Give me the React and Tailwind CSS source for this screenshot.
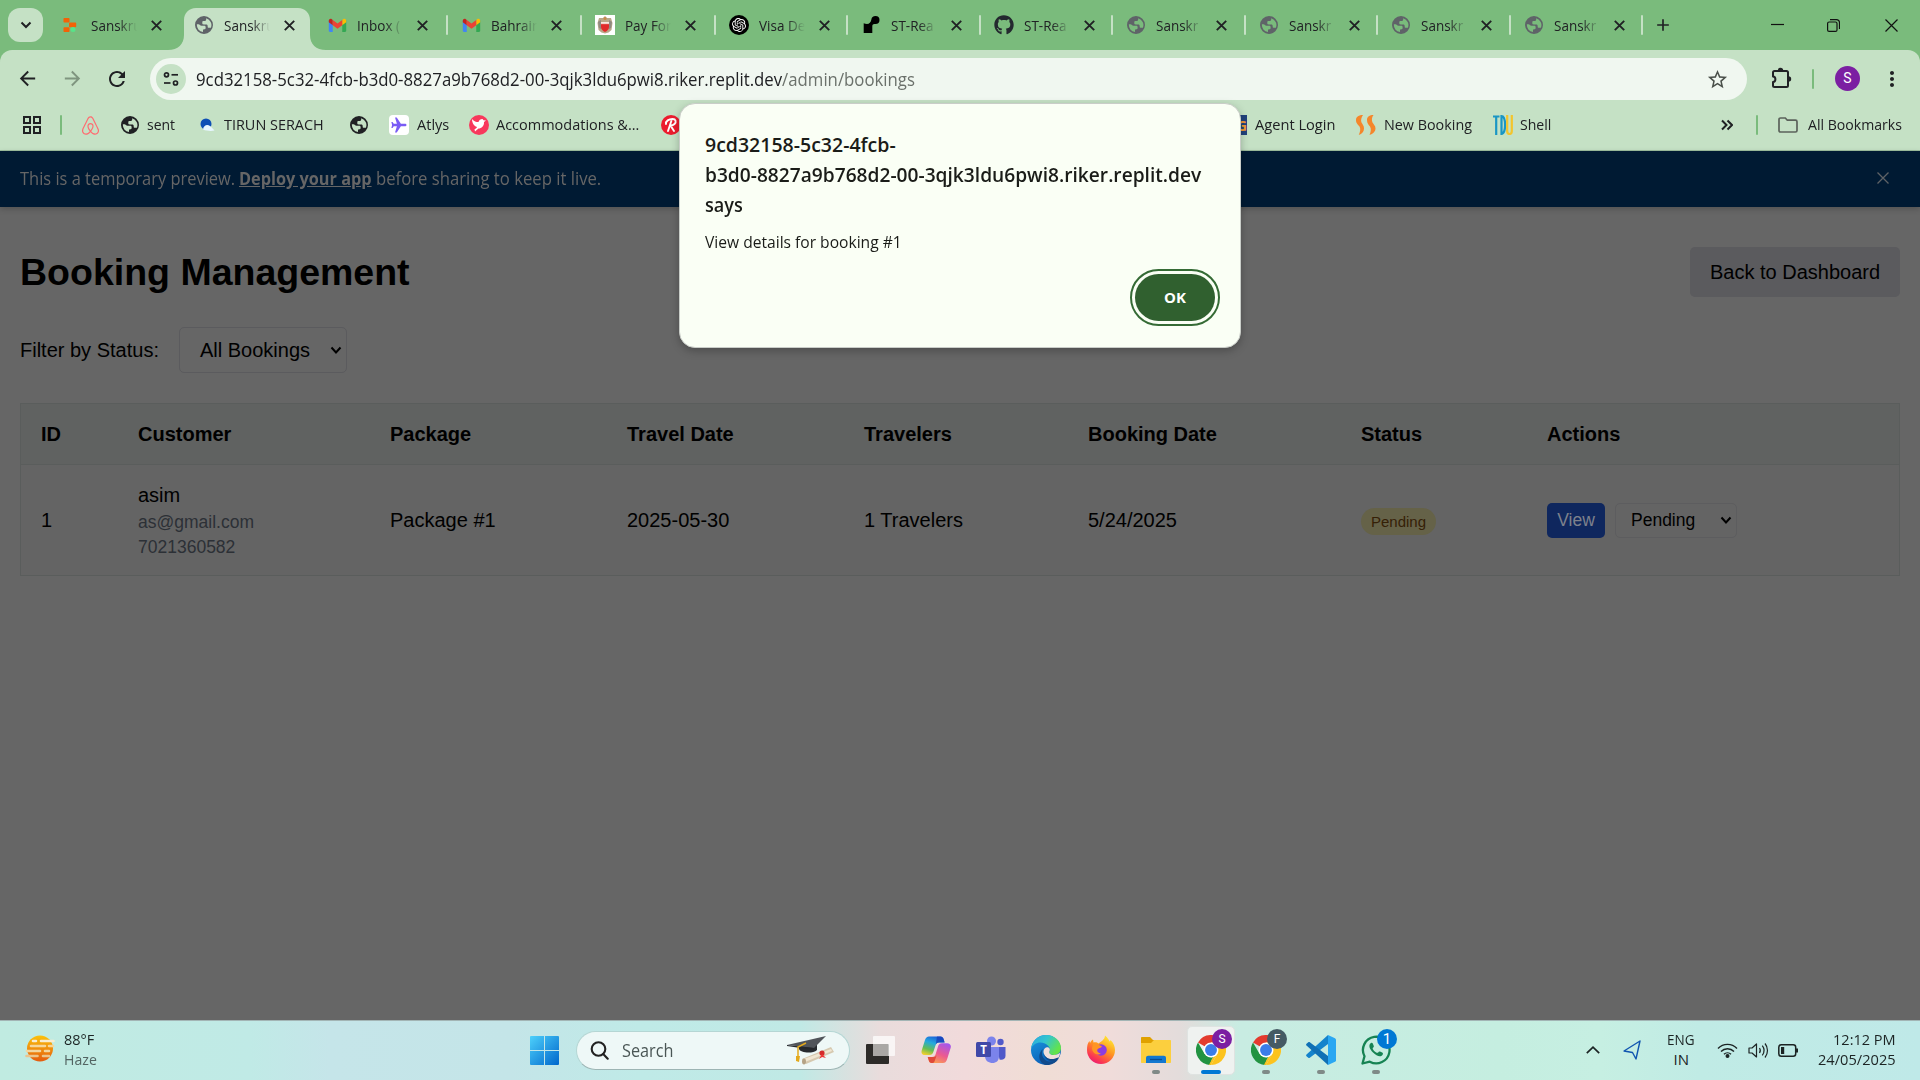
import React, { useLayoutEffect, useRef, useState } from "react";
import { MdRefresh, MdArrowBack, MdArrowForward, MdStarBorder, MdAdd, MdMoreVert } from "react-icons/md";
import { FaGithub, FaAirbnb } from "react-icons/fa";
import { SiOpenai } from "react-icons/si";

/* Single line of text condensed or widened to fill the width of its box. */
function Fit({ className = "", children }) {
  const box = useRef(null);
  const text = useRef(null);
  const [scale, setScale] = useState(1);
  useLayoutEffect(() => {
    setScale(box.current.clientWidth / text.current.offsetWidth);
  }, []);
  return (
    <span ref={box} className={`block shrink-0 whitespace-nowrap ${className}`}>
      <span ref={text} className="inline-block origin-left" style={{ transform: `scaleX(${scale})` }}>
        {children}
      </span>
    </span>
  );
}

/* ---------- favicons ---------- */
const Globe = ({ className }) => (
  <svg className={`size-[18px] shrink-0 ${className}`} viewBox="0 0 18 18">
    <path
      fillRule="evenodd"
      fill="currentColor"
      d="M9 0a9 9 0 1 0 0 18A9 9 0 0 0 9 0zM11.200 2.200v1.300c0 .9-.7 1.500-1.600 1.500H8.200c-.5 0-.9.4-.9.900v1.300c0 .8.5 1.200 1.300 1.200h2.600c1 0 1.500.7 1.500 1.500v.9c0 .6.4 1 1 1h2.200A7.200 7.200 0 0 0 11.200 2.200zM1.900 8.200A7.200 7.200 0 0 0 8 16.100v-1.500c0-.9.500-1.300 1.300-1.300.9 0 1.300-.6 1.300-1.400v-.8c0-.9-.6-1.400-1.400-1.400H6.500c-.7 0-1.200-.3-1.600-.8-.4-.5-.8-.7-1.400-.7z"
    />
  </svg>
);
const GreyGlobe = () => <Globe className="text-[#5f6368]" />;
const DarkGlobe = () => <Globe className="mx-px text-[#202124]" />;

const Replit = () => (
  <svg className="size-5" viewBox="0 0 20 20">
    <rect x="2.500" y="3" width="6" height="4.600" rx=".8" fill="#f26207" />
    <rect x="8" y="7.600" width="7.200" height="4.600" rx=".8" fill="#f26207" />
    <rect x="2.500" y="12.200" width="6" height="4.800" rx=".8" fill="#f26207" />
    <circle cx="12" cy="14.500" r="2.500" fill="#57e389" />
  </svg>
);

const Gmail = () => (
  <svg className="size-[19px]" viewBox="0 0 24 24">
    <path d="M1 5.500v13.200c0 .8.700 1.500 1.500 1.500H6V10.500z" fill="#4285f4" />
    <path d="M18 10.500v9.700h3.500c.8 0 1.500-.7 1.500-1.500V5.500z" fill="#34a853" />
    <path d="M18 5v6.600l5-3.800V5.900c0-2-2.200-3.100-3.800-1.900z" fill="#fbbc04" />
    <path d="M6 5v6.600L1 7.800V5.900C1 3.900 3.200 2.800 4.800 4z" fill="#c5221f" />
    <path d="M6 11.600V4.900l6 4.500 6-4.500v6.700l-6 4.500z" fill="#ea4335" />
  </svg>
);

const Crest = () => (
  <svg className="size-5" viewBox="0 0 20 20">
    <rect width="20" height="20" fill="#fff" />
    <path d="M4 3h4l2-2 2 2h4l1.500 5-1 7-3 2.500-3.500 1-3.500-1-3-2.500-1-7z" fill="#b9a888" />
    <path d="M3 7l3-2v9l-2-1zM17 7l-3-2v9l2-1z" fill="#8f8a80" />
    <circle cx="10" cy="3.500" r="1.500" fill="#c98a4a" />
    <path d="M6 7h8v5c0 2.600-2 4-4 5-2-1-4-2.400-4-5z" fill="#e02b2b" />
    <path d="M6 7h8v2.500l-1-1-1 1-1-1-1 1-1-1-1 1-1-1-1 1z" fill="#f5e9e0" />
  </svg>
);

const OpenAI = () => (
  <span className="flex size-5 items-center justify-center rounded-full bg-black">
    <SiOpenai className="size-[14px] text-white" />
  </span>
);

const Render = () => (
  <svg className="size-5" viewBox="0 0 20 20">
    <path d="M14.500 1a4.300 4.300 0 0 0-4.200 3.700C9.900 7.300 8.300 9 6 9c-1.200 0-2.300-.3-3.300-.8V18h8.600v-7c0-1.300.9-2 2-2h1.200a4 4 0 0 0 0-8z" fill="#000" />
  </svg>
);

const tabs = [
  { title: "Sanskru", icon: <Replit />, width: "w-[133px]" },
  { title: "Sanskru", icon: <GreyGlobe />, width: "w-[133px]", active: true },
  { title: "Inbox (", icon: <Gmail />, width: "w-[134px]", sep: true },
  { title: "Bahrain", icon: <Gmail />, width: "w-[134px]", sep: true },
  { title: "Pay For", icon: <Crest />, width: "w-[134px]", sep: true },
  { title: "Visa De", icon: <OpenAI />, width: "w-[132px]", sep: true },
  { title: "ST-Rea", icon: <Render />, width: "w-[133px]", sep: true },
  { title: "ST-Rea", icon: <FaGithub className="size-5 text-[#24292f]" />, width: "w-[132px]", sep: true },
  { title: "Sanskr", icon: <GreyGlobe />, width: "w-[133px]", sep: true },
  { title: "Sanskr", icon: <GreyGlobe />, width: "w-[132px]", sep: true },
  { title: "Sanskr", icon: <GreyGlobe />, width: "w-[133px]", sep: true },
  { title: "Sanskr", icon: <GreyGlobe />, width: "w-[132px]", sep: true },
];

function Tab({ title, icon, width, active, sep }) {
  return (
    <div className={`relative flex h-[50px] shrink-0 items-center pl-[14px] ${width}`}>
      {active && (
        <svg className="absolute top-2 left-[-12px] h-[42px] w-[158px]" viewBox="0 0 158 42">
          <path d="M0 42C10 42 16 36 16 27V12C16 5 21 0 28 0H130C137 0 142 5 142 12V27C142 36 148 42 158 42Z" fill="#c5e1c5" />
        </svg>
      )}
      <span className="relative flex h-5 w-5 shrink-0 items-center justify-center">{icon}</span>
      <span className="relative ml-[10px] w-[46px] shrink-0 text-[15px] leading-6 whitespace-nowrap text-[#202124] [mask-image:linear-gradient(to_right,black_60%,transparent)]">
        <span className="inline-block origin-left scale-x-[0.9]">{title}</span>
      </span>
      <svg className="relative ml-[14px] size-[11px] shrink-0" viewBox="0 0 11 11" stroke="#202124" strokeWidth="1.900"><path d="M.8.8l9.400 9.400M10.200.8.8 10.200" /></svg>
      {sep && <span className="absolute right-[-1px] h-5 w-[2px] rounded-full bg-[#c5e1c5]" />}
    </div>
  );
}

function TabStrip() {
  return (
    <div className="flex h-[50px] items-center bg-[#7abb7c]">
      <span className="ml-2 flex h-[34px] w-[35px] shrink-0 items-center justify-center rounded-[12px] bg-[#c5e1c5]">
        <svg className="h-3 w-3" viewBox="0 0 12 12" fill="none" stroke="#202124" strokeWidth="2"><path d="M1.500 3.500 6 8l4.500-4.500" /></svg>
      </span>
      <div className="ml-1 flex">{tabs.map((t, i) => <Tab key={i} {...t} />)}</div>
      <MdAdd className="ml-[11px] size-5 text-[#202124]" />
      <div className="ml-auto flex items-center text-[#111]">
        <svg className="mr-[43px] size-[13px]" viewBox="0 0 13 13"><path d="M0 5.500h13" stroke="currentColor" strokeWidth="1.200" /></svg>
        <svg className="mr-[45px] size-[13px]" viewBox="0 0 13 13" fill="none" stroke="currentColor" strokeWidth="1.200">
          <rect x=".6" y="3" width="9.400" height="9.400" rx="1.500" />
          <path d="M3 .6h6.500a3 3 0 0 1 3 3V10" />
        </svg>
        <svg className="mr-[22px] size-[13px]" viewBox="0 0 13 13"><path d="M.5.5l12 12M12.500.5l-12 12" stroke="currentColor" strokeWidth="1.200" /></svg>
      </div>
    </div>
  );
}

function Toolbar() {
  return (
    <div className="flex h-[58px] items-center rounded-t-[12px] bg-[#c5e1c5] text-[#202124]">
      <MdArrowBack className="-mt-px ml-[16px] size-[23px]" />
      <MdArrowForward className="-mt-px ml-[22px] size-[23px] text-[#7f957f]" />
      <MdRefresh className="-mt-px ml-[21px] size-[24px]" />
      <div className="ml-[21px] flex h-[42px] w-[1597px] items-center rounded-full bg-[#f0f7f0]">
        <span className="ml-[6px] flex size-[30px] items-center justify-center rounded-full bg-[#c5e1c5]">
          <svg className="size-4" viewBox="0 0 16 16" fill="none" stroke="#202124" strokeWidth="1.700">
            <circle cx="3.500" cy="3.800" r="2" /><path d="M8.500 3.800H15" />
            <circle cx="12.500" cy="12" r="2" /><path d="M1 12h6.500" />
          </svg>
        </span>
        <Fit className="ml-[10px] w-[719px] text-[17.5px] leading-6">
          9cd32158-5c32-4fcb-b3d0-8827a9b768d2-00-3qjk3ldu6pwi8.riker.replit.dev<span className="text-[#6b716b]">/admin/bookings</span>
        </Fit>
        <MdStarBorder className="mr-[18px] ml-auto size-[23px] text-[#4a504a]" />
      </div>
      <svg className="-mt-[2px] ml-[24px] size-[22px]" viewBox="0 0 22 22">
        <path d="M3.500 4h12c.9 0 1.500.6 1.500 1.500v13c0 .9-.6 1.500-1.500 1.500h-12c-.9 0-1.500-.6-1.500-1.500v-3.600c3.200-.2 3.200-5.200 0-5.400v-4C2 4.600 2.600 4 3.500 4z" fill="none" stroke="#202124" strokeWidth="2" strokeLinejoin="round" />
        <path d="M6.800 3.500a2.700 2.700 0 0 1 5.400 0zM17.500 9.200a2.700 2.700 0 0 1 0 5.400z" fill="#202124" />
      </svg>
      <span className="ml-[19px] h-5 w-[2px] rounded-full bg-[#7abb7c]" />
      <span className="-mt-px ml-[21px] flex size-[25px] items-center justify-center rounded-full bg-[#7b1fa2] font-[Roboto] text-[14px] text-white">S</span>
      <MdMoreVert className="-mt-px ml-[20px] size-6" />
    </div>
  );
}

function Bookmarks() {
  return (
    <div className="flex h-[43px] items-center border-b border-[#9fbf9f] bg-[#c5e1c5] pb-[8px] text-[15px] leading-5 text-[#202124]">
      <svg className="ml-[22px] size-5 shrink-0" viewBox="0 0 20 20" fill="none" stroke="#202124" strokeWidth="2">
        <rect x="2" y="2" width="6" height="6" /><rect x="12" y="2" width="6" height="6" />
        <rect x="2" y="12" width="6" height="6" /><rect x="12" y="12" width="6" height="6" />
      </svg>
      <span className="ml-[18px] h-5 w-[2px] shrink-0 rounded-full bg-[#7abb7c]" />
      <FaAirbnb className="ml-[18px] size-[21px] shrink-0 text-[#ff6b70]" />
      <span className="ml-[19px] flex"><DarkGlobe /></span>
      <Fit className="mb-[2px] ml-[7px] w-[28px]">sent</Fit>
      <svg className="ml-[22px] size-5 shrink-0" viewBox="0 0 20 20">
        <circle cx="9" cy="9" r="5.500" fill="#0d4fb5" />
        <path d="M6 14.500c.5-4 4-5.500 7-3.500 1.500 1 2.500 2.500 4.500 4.500-3 .8-8 .5-11.500-1z" fill="#e7f6ff" />
      </svg>
      <Fit className="mb-[2px] ml-[7px] w-[100px]">TIRUN SERACH</Fit>
      <span className="ml-[25px] flex"><DarkGlobe /></span>
      <span className="ml-[20px] flex size-5 shrink-0 items-center justify-center rounded-[4px] bg-white">
        <svg className="size-[18px]" viewBox="0 0 24 24"><path d="M22 12c0-1-1-1.700-2.200-1.700h-5.300L9 2H6.700l2.500 8.300H5L3.400 8H1.800l1 4-1 4h1.600L5 13.700h4.200L6.700 22H9l5.500-8.300h5.300C21 13.700 22 13 22 12z" fill="#7a5cf5" /></svg>
      </span>
      <Fit className="mb-[2px] ml-[8px] w-[32px]">Atlys</Fit>
      <span className="ml-[20px] flex size-5 shrink-0 items-center justify-center rounded-full bg-[#f8385c]">
        <svg className="size-4" viewBox="0 0 16 16"><path d="M1 2c2 2.500 4 3 6.500 3C8 3 9.500 2 11.500 2l1 1.200 2.500.3-2 1.500c.3 4-2.500 6.500-5.500 6.500L4 14.500l-.5-2.300C5 11.500 5.500 11 6 10 3 9 1 6 1 2z" fill="#fff" /></svg>
      </span>
      <Fit className="mb-[2px] ml-[7px] w-[143px]">Accommodations &amp;...</Fit>
      <span className="ml-[22px] flex size-5 shrink-0 items-center justify-center rounded-full bg-[#ec1c2e]">
        <svg className="size-4" viewBox="0 0 16 16" fill="none" stroke="#fff" strokeWidth="1.900" strokeLinecap="round" strokeLinejoin="round"><path d="M3 7C2.500 4 6 2 9.500 2 13 2 13.500 5 11.500 7 10.500 8 9 8.500 7.500 8.500L11 14M8.500 3.500 5 14" /></svg>
      </span>
      <span className="ml-[546px] flex size-5 shrink-0 items-center justify-end overflow-hidden bg-[#21427c] text-[15px] font-bold text-[#f09a35]">G</span>
      <Fit className="mb-[2px] ml-[8px] w-[80px]">Agent Login</Fit>
      <svg className="ml-[21px] size-5 shrink-0" viewBox="0 0 20 20" fill="#f5862b">
        <path d="M7 0C3 0 0 1.500 0 5s2 4.500 3.500 6.500C5 14 4 17 2.800 20 6 19 8 16.500 8 13.500S6.500 9.500 5.500 7.500 5.500 2 7 0zM17.500 0c-4 0-6.500 1.500-6.500 5s1.500 4.500 3 6.500c1.500 2.500.8 5.500-.5 8.500 3.500-1 6-3.500 6-6.500s-2-4-3-6S15.700 2 17.500 0z" />
      </svg>
      <Fit className="mb-[2px] ml-[8px] w-[88px]">New Booking</Fit>
      <svg className="ml-[21px] size-5 shrink-0" viewBox="0 0 20 20" fill="none" strokeWidth="2.200">
        <path d="M0 1.500h6.500M3.200 1v19" stroke="#1a96c4" />
        <path d="M8.500 1.200v17.600c5 0 4.500-17.600 0-17.600z" stroke="#1a96c4" />
        <path d="M14.200 0v16c0 4 4.600 4 4.600 0V0" stroke="#f3c52c" />
      </svg>
      <Fit className="mb-[2px] ml-[7px] w-[31px]">Shell</Fit>
      <svg className="ml-[170px] h-[12px] w-[12px] shrink-0" viewBox="0 0 12 12" fill="none" stroke="#202124" strokeWidth="2"><path d="M1 1.500 5.500 6 1 10.500M6.500 1.500 11 6l-4.500 4.500" /></svg>
      <span className="ml-[23px] h-5 w-[2px] shrink-0 rounded-full bg-[#7abb7c]" />
      <svg className="ml-[20px] h-[16px] w-5 shrink-0" viewBox="0 0 20 16" fill="none" stroke="#5b625b" strokeWidth="1.700"><path d="M1 13.500v-11C1 1.600 1.600 1 2.500 1h4.800l2 2.200h8.200c.9 0 1.500.6 1.500 1.500v8.800c0 .9-.6 1.500-1.500 1.500h-15C1.600 15 1 14.400 1 13.500z" /></svg>
      <Fit className="mb-[2px] ml-[10px] w-[94px]">All Bookmarks</Fit>
    </div>
  );
}

/* ---------- page ---------- */
const Chevron = ({ className = "" }) => (
  <svg className={`h-[9px] w-3 ${className}`} viewBox="0 0 12 9" fill="none" stroke="#000" strokeWidth="2"><path d="M1.500 1.500 6 6.500l4.500-5" /></svg>
);

const headers = ["ID", "Customer", "Package", "Travel Date", "Travelers", "Booking Date", "Status", "Actions"];
const columns = "grid grid-cols-[97px_252px_237px_237px_224px_273px_186px_1fr] items-center";

function Page() {
  return (
    <main className="flex h-[869px] flex-col bg-[#666] font-['Liberation_Sans',Arial,sans-serif] text-xl text-black">
      <div className="flex h-14 shrink-0 items-center bg-[#001a33] px-5 pb-[2px] font-['Open_Sans','Segoe_UI',sans-serif] text-[17.5px] leading-6 text-[#666] shadow-[0_2px_6px_rgba(0,0,0,0.2)]">
        <Fit className="w-[219px]">This is a temporary preview.&nbsp;</Fit>
        <Fit className="w-[133px] font-bold"><span className="underline">Deploy your app</span></Fit>
        <Fit className="ml-[4px] w-[225px]">before sharing to keep it live.</Fit>
        <svg className="mr-[11px] ml-auto size-3" viewBox="0 0 12 12"><path d="M.5.5l11 11M11.500.5l-11 11" stroke="#5e6266" strokeWidth="1.300" /></svg>
      </div>

      <div className="flex flex-col px-5 pt-10">
        <div className="flex h-[50px] items-center justify-between">
          <h1 className="text-[37.5px] leading-[50px] font-bold">Booking Management</h1>
          <button className="h-[50px] w-[210px] rounded-[5px] bg-[#5b5b5e] whitespace-nowrap">Back to Dashboard</button>
        </div>

        <div className="mt-[30px] flex h-[46px] items-center">
          <span className="w-[159px]">Filter by Status:</span>
          <div className="flex h-[46px] w-[168px] items-center justify-between rounded-[5px] border border-[#5b5b5e] pr-[4px] pl-5">
            All Bookings
            <Chevron className="mt-px" />
          </div>
        </div>

        <div className="mt-[30px] border border-[#5a5d5c]">
          <div className={`${columns} h-[61px] border-b border-[#5a5d5c] bg-[#606261] font-bold`}>
            {headers.map((h) => <span key={h} className="pl-5">{h}</span>)}
          </div>
          <div className={`${columns} h-[110px] bg-[#646464]`}>
            <span className="pl-5">1</span>
            <div className="flex flex-col pl-5">
              <span className="leading-[30px]">asim</span>
              <span className="text-[17.5px] leading-[25px] text-[#2c3036]">as@gmail.com</span>
              <span className="text-[17.5px] leading-[25px] text-[#2c3036]">7021360582</span>
            </div>
            <span className="pl-5">Package #1</span>
            <span className="pl-5">2025-05-30</span>
            <span className="pl-5">1 Travelers</span>
            <span className="pl-5">5/24/2025</span>
            <div className="mt-[3px] pl-5">
              <span className="flex h-[27px] w-[75px] items-center justify-center rounded-full bg-[#656248] text-[15px] text-[#352006]">Pending</span>
            </div>
            <div className="flex gap-[10px] pl-5 text-[17.5px]">
              <button className="h-[35px] w-[58px] rounded-[5px] bg-[#0f275e] text-[#7d818c]">View</button>
              <div className="flex h-[35px] w-[122px] items-center justify-between rounded-[5px] border border-[#5d5d5f] pr-[4px] pl-[15px]">
                Pending
                <Chevron />
              </div>
            </div>
          </div>
        </div>
      </div>
    </main>
  );
}

function Dialog() {
  return (
    <div className="absolute top-[103px] left-[679px] flex h-[245px] w-[562px] flex-col rounded-[16px] border border-[#c9cdc8] bg-[#fafff5] px-[25px] pt-[26px] text-[#1a1c18] shadow-[0_3px_8px_rgba(0,0,0,0.25)]">
      <div className="text-[19.5px] leading-[30px] font-semibold">
        <Fit className="w-[191px]">9cd32158-5c32-4fcb-</Fit>
        <Fit className="w-[496px]">b3d0-8827a9b768d2-00-3qjk3ldu6pwi8.riker.replit.dev</Fit>
        <Fit className="w-[38px]">says</Fit>
      </div>
      <Fit className="mt-[10px] w-[197px] text-[16px] leading-[24px]">View details for booking #1</Fit>
      <button className="mt-[15px] mr-[-5px] flex h-[57px] w-[90px] items-center justify-center self-end rounded-full border-2 border-[#356b35]">
        <span className="flex h-[47px] w-[80px] items-center justify-center rounded-full bg-[#30602f] text-[15px] font-bold text-white">
          <Fit className="w-[22px]">OK</Fit>
        </span>
      </button>
    </div>
  );
}

/* ---------- taskbar ---------- */
const ChromeLogo = () => (
  <svg className="size-[30px]" viewBox="0 0 48 48">
    <path d="M24 24 3.200 12A24 24 0 0 1 44.800 12H24z" fill="#e33b2e" />
    <path d="M24 12h20.800A24 24 0 0 1 24 48l10.400-18z" fill="#fcc31e" />
    <path d="M3.200 12 13.600 30 24 36l.4 0L24 48A24 24 0 0 1 3.200 12z" fill="#229342" />
    <path d="M34.400 30 24 48l-3.500-.5L28 34z" fill="#fcc31e" />
    <path d="M20.500 47.500 28 34l-4 2-10.400-6z" fill="#229342" />
    <circle cx="24" cy="24" r="12" fill="#fff" />
    <circle cx="24" cy="24" r="9.500" fill="#3b7de9" />
  </svg>
);

const Badge = ({ className, children }) => (
  <span className={`absolute -top-[6px] -right-[6px] flex size-5 items-center justify-center rounded-full font-[Roboto] leading-none text-white ${className}`}>{children}</span>
);

const Dot = () => <span className="absolute -bottom-[9px] left-[11px] h-1 w-2 rounded-full bg-[#7f8a87]" />;

function Taskbar() {
  return (
    <footer className="flex h-[60px] items-center border-t border-[#a3b5b5] bg-[linear-gradient(90deg,#c0ebe1_0px,#c0eae6_250px,#c5e5e9_330px,#c4e5e8_510px,#bfeae7_640px,#c0e9e5_800px,#e9dcdc_880px,#f1dadb_965px,#f0ddd5_1040px,#f0dcda_1110px,#e3dcdb_1180px,#c8ece2_1240px,#c5eee0_1500px,#c6efe2_1600px,#c0ebe5_1700px,#bfe9e8_1920px)] pb-px text-[15px] leading-5 text-[#1c2424]">
      <svg className="ml-[25px] size-[30px] shrink-0" viewBox="0 0 30 30">
        <defs>
          <linearGradient id="sun" x1="0" y1="0" x2="0" y2="1"><stop offset="0" stopColor="#fbc20a" /><stop offset="1" stopColor="#e45c10" /></linearGradient>
        </defs>
        <circle cx="15" cy="13.500" r="13" fill="url(#sun)" />
        <g strokeWidth="2.600" strokeLinecap="round" fill="none">
          <path d="M8 6h3M16 6h12.500" stroke="#f9ecd0" />
          <path d="M6 11h14M24 11h4" stroke="#f5d69a" />
          <path d="M2 16h13M20 16h4" stroke="#f2d6a0" />
          <path d="M1.500 21h11M18 21h6" stroke="#ecc48c" />
        </g>
      </svg>
      <div className="mb-[3px] ml-[9px] w-[466px]">
        <Fit className="w-[30px]">88°F</Fit>
        <Fit className="w-[33px] text-[#536462]">Haze</Fit>
      </div>
      <svg className="size-[29px] shrink-0" viewBox="0 0 29 29">
        <defs>
          <linearGradient id="win" x1="0" y1="0" x2="1" y2="1"><stop offset="0" stopColor="#4dd0fb" /><stop offset="1" stopColor="#0067cc" /></linearGradient>
        </defs>
        <path d="M1 0h13v14H0V1a1 1 0 0 1 1-1zM15 0h13a1 1 0 0 1 1 1v13H15zM0 15h14v14H1a1 1 0 0 1-1-1zM15 15h14v13a1 1 0 0 1-1 1H15z" fill="url(#win)" />
      </svg>
      <div className="ml-[17px] flex h-[39px] w-[274px] shrink-0 items-center rounded-full border border-b-[#9db5b4] border-[#b5d6d4] bg-[#eef8f7] pr-[14px] pl-[13px]">
        <svg className="size-[19px]" viewBox="0 0 19 19" fill="none" stroke="#222" strokeWidth="2.100" strokeLinecap="round"><circle cx="8.500" cy="8" r="6.800" /><path d="m13.200 13 4.500 4.700" /></svg>
        <Fit className="ml-[13px] w-[51px] text-[17.5px] leading-6 text-[#4a5655]">Search</Fit>
        <svg className="ml-auto h-[30px] w-[48px]" viewBox="0 0 48 30">
          <path d="M12 8v6c1 4 14 5 18 1V7z" fill="#262a2f" />
          <path d="M0 10 39 1 27 13z" fill="#50545a" />
          <path d="m0 10 27 3v2L0 11z" fill="#24272b" />
          <path d="M19 8 11 12v12" stroke="#e3a91d" strokeWidth="1.500" fill="none" />
          <path d="M9 21h4l-1 6-3-1z" fill="#e3a91d" />
          <path d="m15 24 29-12 3 5-28 12z" fill="#d6c9b0" />
          <path d="m17 24 27-10 1 2-27 11z" fill="#f0e6d2" />
          <ellipse cx="17" cy="26.500" rx="2" ry="3" fill="#b5a386" />
          <circle cx="35" cy="18" r="2.600" fill="#d42a2a" /><path d="m35 19 4 4-4-1-3 2z" fill="#ef3434" />
        </svg>
      </div>
      <svg className="ml-[15px] size-[30px] shrink-0" viewBox="0 0 30 30">
        <rect x="1" y="9" width="23" height="20" rx="1" fill="#2d2b29" />
        <rect x="8" y="1" width="22" height="20" rx="1" fill="#fff" fillOpacity=".72" />
        <rect x="8" y="9" width="15" height="12" fill="#aaa7a5" />
      </svg>
      <svg className="ml-[26px] size-[30px] shrink-0" viewBox="0 0 30 30">
        <defs>
          <linearGradient id="cpA" x1=".6" y1="0" x2=".2" y2="1"><stop offset="0" stopColor="#1b62d9" /><stop offset=".35" stopColor="#23a9dd" /><stop offset=".7" stopColor="#65bd53" /><stop offset="1" stopColor="#f2d02e" /></linearGradient>
          <linearGradient id="cpB" x1=".8" y1="0" x2=".3" y2="1"><stop offset="0" stopColor="#a355ee" /><stop offset=".55" stopColor="#ec5a90" /><stop offset="1" stopColor="#fba052" /></linearGradient>
        </defs>
        <path d="M8 1.500h11.500c1.600 0 2.600 1 3.100 2.500l1 3.500H18c-2 0-3 1-3.500 3L12.300 17c-.6 2-1.800 3-3.600 3H4C1 20 0 18 .7 15.500L4 5C4.800 2.700 6 1.500 8 1.500z" fill="url(#cpA)" />
        <path d="M16 1.500h3.500c1.600 0 2.600 1 3.100 2.500l1 3.500H18c-1.500 0-2.500.7-3.200 2z" fill="#1740b8" fillOpacity=".8" />
        <path d="M22 28H10.500c-1.600 0-2.300-1-2.700-2.500L6.700 22H11c2 0 3-1 3.700-3L17 11.500c.7-2 1.800-3.200 3.800-3.200H26c3 0 4.400 2 3.700 4.500L26 24.500C25.200 27 24 28 22 28z" fill="url(#cpB)" />
        <path d="M6.700 22h6c1.400 0 2.200-.5 3-2l-2 6c-.6 1.600-1.200 2-2.200 2h-1c-1.600 0-2.300-1-2.700-2.500z" fill="#e04a3a" />
      </svg>
      <svg className="ml-[25px] size-[30px] shrink-0" viewBox="0 0 30 30">
        <circle cx="24.500" cy="7" r="3.200" fill="#5059c9" /><path d="M21 12h8.500v9c0 3-3 4.500-6 3.500z" fill="#5059c9" />
        <circle cx="15.500" cy="6" r="4.500" fill="#7b83eb" />
        <path d="M9 12h14v9c0 5-3 7-6.500 7S9 26 9 21z" fill="#7b83eb" />
        <rect x="0" y="7" width="15" height="15" rx="1.500" fill="#4048a8" />
        <text x="7.500" y="18.500" textAnchor="middle" fontFamily="Open Sans" fontSize="11.500" fontWeight="700" fill="#fff">T</text>
      </svg>
      <svg className="ml-[25px] size-[30px] shrink-0" viewBox="0 0 30 30">
        <defs>
          <linearGradient id="edA" x1="0" y1="0" x2="1" y2=".5"><stop offset="0" stopColor="#2aa5e0" /><stop offset=".5" stopColor="#33c5cf" /><stop offset="1" stopColor="#63e34b" /></linearGradient>
          <linearGradient id="edB" x1="0" y1="0" x2=".5" y2="1"><stop offset="0" stopColor="#1b9de2" /><stop offset="1" stopColor="#0b5cb5" /></linearGradient>
        </defs>
        <circle cx="15" cy="15" r="15" fill="url(#edB)" />
        <path d="M0 14C1 5.500 7.500 0 15 0c9 0 15 6.500 15 13 0 4.500-3.500 7-7.500 7-3 0-4.500-1-4.500-2 0-.8 1-1.200 1-3 0-3.500-4-7.500-9.500-7.500C5 7.500 1.500 10 0 14z" fill="url(#edA)" />
        <path d="M12 14c-3 6 1 12.500 7.500 12.500 3.500 0 6.500-1.500 8-2.500C25 28 20 30.500 15.500 30 8 29 5.500 19 12 14z" fill="#114a8b" />
        <path d="M12.500 16c.5-3 3-4.500 5-3.500 1.500 1 1.700 2.300 1 3.700-1 1.800.5 3.800 4 3.800 3 0 5.500-1 6.500-2.500 0 4-2 6-4.500 7-6 2-12.500-3-12-8.500z" fill="#f1dedb" />
        <path d="M12.300 17c.7 5 6 8.500 12 6.500l2-.8c.9-.3 1.500.5.900 1.200-5 5-14 2-14.900-6.900z" fill="#114a8b" />
      </svg>
      <svg className="ml-[25px] size-[30px] shrink-0" viewBox="0 0 30 30">
        <defs>
          <linearGradient id="ff" x1=".8" y1="0" x2=".2" y2="1"><stop offset="0" stopColor="#fff036" /><stop offset=".45" stopColor="#ff9421" /><stop offset=".8" stopColor="#fb3752" /><stop offset="1" stopColor="#e6157d" /></linearGradient>
        </defs>
        <path d="M19 .5c3 2.500 4 4.500 4.500 6 1-.5 1-1.500 1-1.500 3 3 4.500 6.500 4.500 10A14 14 0 0 1 1 15c0-4 .5-7 2.500-9l.5 2c1-2 2-3 3-3.500l.5 3c2-.5 4 0 5 1C14 7 19 5 19 .5z" fill="url(#ff)" />
        <circle cx="15" cy="15" r="5.800" fill="#8b3de0" />
        <path d="M7 9c2-1 4.500-.5 6 1l3 1.200c-1 2-3.500 1.800-4.500 3-1 2 1 4 3.500 4-3 3-9 0-9-5z" fill="#ff9524" />
      </svg>
      <div className="relative ml-[25px] size-[30px] shrink-0">
        <svg className="size-[30px]" viewBox="0 0 30 30">
          <path d="M0 3c0-1 .5-1 1-1h8l3 3h17v5H0z" fill="#e0a100" />
          <path d="M0 8h10l3-3h16c.6 0 1 .4 1 1v21c0 .6-.4 1-1 1H1c-.6 0-1-.4-1-1z" fill="#fccf3e" />
          <path d="M5 28v-5c0-1.400 1-2.200 2.200-2.200h15.600c1.300 0 2.200.8 2.200 2.200v5z" fill="#1378d0" />
          <path d="M9 24.500h12" stroke="#0b4d92" strokeWidth="1.300" />
        </svg>
        <Dot />
      </div>
      <div className="ml-[16px] flex h-[49px] w-[48px] shrink-0 items-center justify-center rounded-[5px] border border-[#dfe3e1] bg-[#eff2f0]">
        <div className="relative size-[30px]">
          <ChromeLogo />
          <Badge className="bg-[#7b1fa2] text-[12px]">S</Badge>
          <span className="absolute -bottom-[9px] left-[5px] h-1 w-5 rounded-full bg-[#0078d4]" />
        </div>
      </div>
      <div className="relative ml-[16px] size-[30px] shrink-0">
        <ChromeLogo />
        <Badge className="bg-[#455a64] text-[12px]">F</Badge>
        <Dot />
      </div>
      <div className="relative ml-[25px] size-[30px] shrink-0">
        <svg className="size-[30px]" viewBox="0 0 30 30">
          <path d="M22 0 .5 19.500c-.6.500-.5 1.300 0 1.800l1.800 1.500c.5.400 1 .4 1.500 0L22 9z" fill="#1483cc" />
          <path d="M22 30 .5 10.500c-.6-.5-.5-1.300 0-1.800l1.800-1.500c.5-.4 1-.4 1.500 0L22 21z" fill="#1070b5" />
          <path d="M22 0v30l7-3.200c.6-.3 1-.9 1-1.600V4.800c0-.7-.4-1.300-1-1.600z" fill="#2aa7f2" />
        </svg>
        <Dot />
      </div>
      <div className="relative ml-[25px] size-[30px] shrink-0">
        <svg className="size-[30px]" viewBox="0 0 30 30" fill="none" stroke="#168353" strokeWidth="2.300">
          <path d="M1.500 28.500l2-7.200A13.300 13.300 0 1 1 8.800 26.700z" strokeLinejoin="round" />
          <path d="M10 8c-3 2-1.500 6 2 9.500s7.500 5 9.500 2.500c.8-1.200.6-1.900-.3-2.400l-2.200-1c-.8-.4-1.200 0-1.800.8-.6.700-1.200.6-2.400-.2-1.500-.9-2.500-2.200-3-3.200-.3-.7 0-1 .5-1.500.6-.7.700-1 .4-1.700L11.800 8.600c-.4-.9-1.200-.9-1.800-.6z" fill="#168353" stroke="none" />
        </svg>
        <Badge className="bg-[#0078d4] text-[15px]">1</Badge>
        <Dot />
      </div>

      <div className="ml-auto flex items-center pr-[24px]">
        <svg className="h-[8px] w-[14px]" viewBox="0 0 14 8" fill="none" stroke="#1c2424" strokeWidth="1.700"><path d="M.8 7.200 7 1.200l6.200 6" /></svg>
        <svg className="ml-[23px] h-5 w-[18px]" viewBox="0 0 18 20" fill="none" stroke="#1055b0" strokeWidth="1.400" strokeLinejoin="round"><path d="M17 1 1 11l8.500 1.500L13 19z" /></svg>
        <div className="mb-[3px] ml-[26px] flex w-[28px] flex-col items-center">
          <Fit className="w-[28px]">ENG</Fit>
          <Fit className="w-[15px]">IN</Fit>
        </div>
        <svg className="-mt-px ml-[22px] h-[16px] w-[21px]" viewBox="0 0 21 16" fill="none" stroke="#1c2424" strokeWidth="1.400">
          <path d="M1 6.500a13 13 0 0 1 19 0M4 9.500a9 9 0 0 1 13 0M7 12.300a5 5 0 0 1 7 0" /><circle cx="10.500" cy="14" r="1.300" fill="#1c2424" />
        </svg>
        <svg className="ml-[10px] h-[17px] w-[21px]" viewBox="0 0 21 17" fill="none" stroke="#1c2424" strokeWidth="1.200" strokeLinejoin="round">
          <path d="M1 6h3l4.500-4v13L4 11H1zM11.500 6c1 1.500 1 3.500 0 5M14.300 3.700c2.300 3 2.300 6.600 0 9.600M17 1.500c3.300 4 3.300 10 0 14" />
        </svg>
        <svg className="ml-[9px] h-[13px] w-[21px]" viewBox="0 0 21 13" fill="none" stroke="#1c2424" strokeWidth="1.500"><rect x=".8" y=".8" width="16.900" height="11.400" rx="2.500" /><rect x="3" y="3" width="3.200" height="7" fill="#1c2424" stroke="none" /><path d="M19 4.500v4" strokeWidth="2" /></svg>
        <div className="mb-[3px] ml-[19px] flex w-[78px] flex-col items-end">
          <Fit className="w-[63px]">12:12 PM</Fit>
          <Fit className="w-[78px]">24/05/2025</Fit>
        </div>
      </div>
    </footer>
  );
}

export default function App() {
  return (
    <div className="relative h-[1080px] w-[1920px] overflow-hidden bg-[#7abb7c] font-['Open_Sans','Segoe_UI',sans-serif]">
      <TabStrip />
      <Toolbar />
      <Bookmarks />
      <Page />
      <Taskbar />
      <Dialog />
    </div>
  );
}
